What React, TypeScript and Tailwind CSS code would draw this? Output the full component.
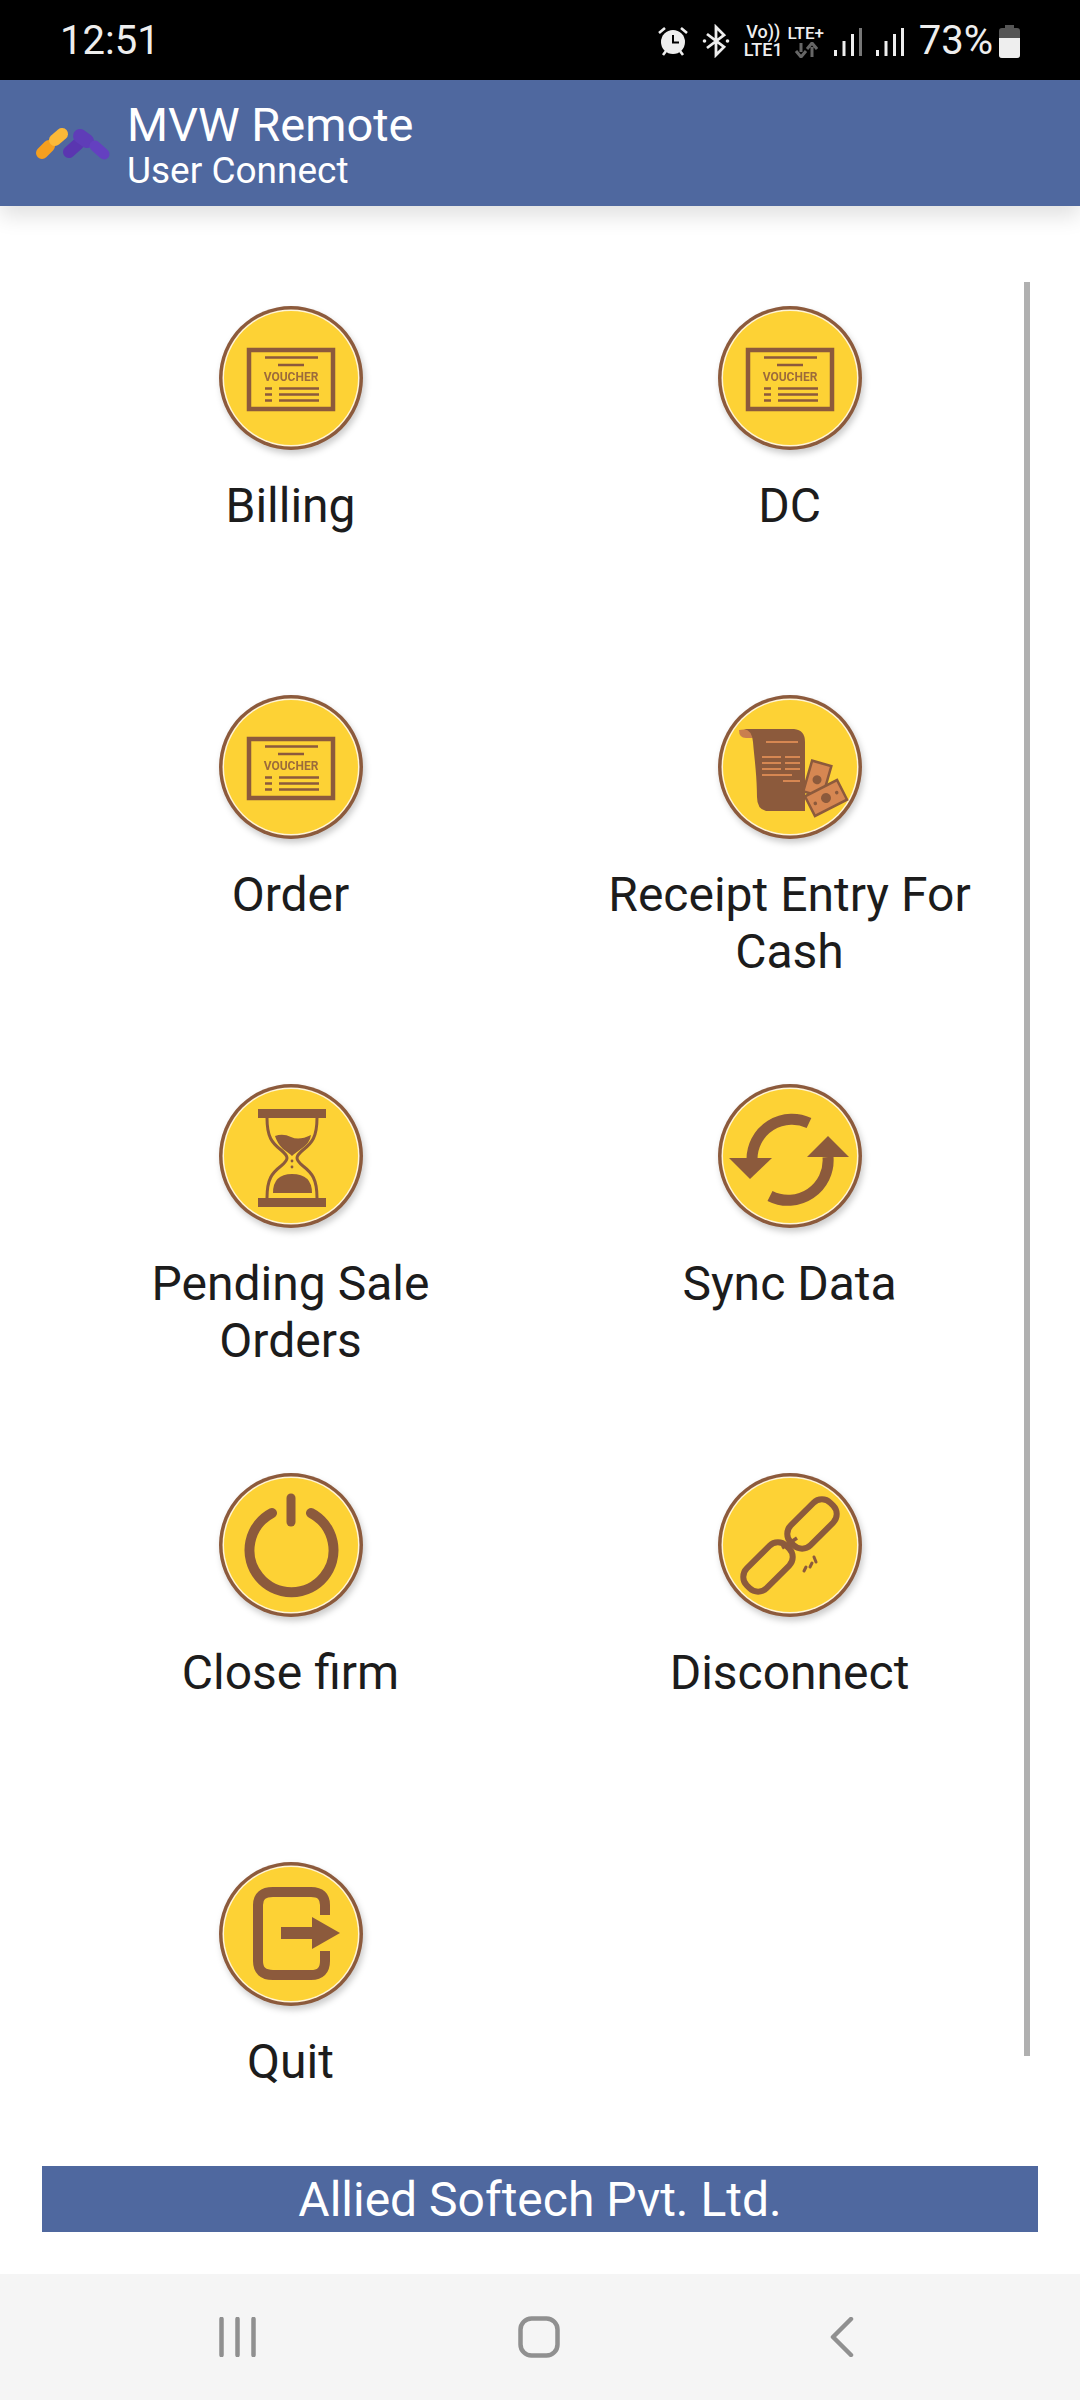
import React from 'react';

const BROWN = '#8c5a3c';

const Badge: React.FC<{ cy?: number; children: React.ReactNode }> = ({ cy = 85, children }) => (
  <svg
    width="180"
    height="180"
    viewBox="0 0 180 180"
    className="block shrink-0 drop-shadow-[2px_4px_3px_rgba(0,0,0,0.2)]"
  >
    <circle cx="90" cy="90" r="72" fill={BROWN} />
    <circle cx="90" cy="90" r="68.500" fill="#fff4d6" />
    <circle cx="90" cy="90" r="67" fill="#fdd235" />
    <g transform={`translate(0 ${90 - cy})`}>{children}</g>
  </svg>
);

const VoucherIcon = () => (
  <g stroke={BROWN} fill="none">
    <rect x="48" y="60" width="84" height="59" strokeWidth="4.500" />
    <path d="M64 67.500H117M77 75H103" strokeWidth="2.400" />
    <text
      x="90"
      y="91"
      textAnchor="middle"
      fontSize="12"
      fontWeight="700"
      fontFamily="Roboto, sans-serif"
      fill={BROWN}
      stroke="none"
      opacity="0.85"
    >
      VOUCHER
    </text>
    <path d="M64 98.500H71M64 104.500H71M64 110.500H71M78 98.500H118M78 104.500H118M78 110.500H118" strokeWidth="2.400" />
  </g>
);

const ReceiptIcon = () => (
  <g>
    <path d="M39 50Q39 58 46 58H53Q52 52 48 49Z" fill="#c97f4e" />
    <path
      d="M44 49H94Q105 50 105 62V131H66Q57 129 57 117C57 95 54 75 53 62Q52 50 44 49Z"
      fill={BROWN}
    />
    <path
      d="M66 62H98M62 77H81M85 77H100M62 83H81M85 83H100M62 89H81M85 89H100M62 95H92M83 101H100"
      stroke="#d68752"
      strokeWidth="2"
      fill="none"
    />
    <g transform="rotate(16 118 100)">
      <rect x="107" y="83" width="20" height="32" fill="#d68752" stroke={BROWN} strokeWidth="2.500" />
      <circle cx="117" cy="100" r="4.500" fill={BROWN} />
    </g>
    <g transform="rotate(-27 126 118)">
      <rect x="108" y="107" width="36" height="22" fill="#d68752" stroke={BROWN} strokeWidth="2.500" />
      <circle cx="126" cy="118" r="5" fill={BROWN} />
      <circle cx="114" cy="118" r="1.800" fill={BROWN} />
      <circle cx="138" cy="118" r="1.800" fill={BROWN} />
    </g>
  </g>
);

const HourglassIcon = () => (
  <g fill={BROWN}>
    <rect x="57" y="38" width="68" height="9" />
    <rect x="57" y="127" width="68" height="9" />
    <path
      d="M66 47C66 66 71 72 80 79Q86 84 86 87Q86 90 80 95C71 102 66 108 66 127M116 47C116 66 111 72 102 79Q96 84 96 87Q96 90 102 95C111 102 116 108 116 127"
      fill="none"
      stroke={BROWN}
      strokeWidth="3"
    />
    <path d="M74 65Q82 62 90 66T110 64Q109 72 100 78Q93 83 91 85Q89 83 82 78Q76 72 74 65Z" />
    <path d="M72 122Q72 103 91 103Q111 103 111 122Z" />
    <circle cx="91" cy="90" r="1.400" />
    <circle cx="91" cy="96" r="1.400" />
  </g>
);

const SyncIcon = () => (
  <g fill={BROWN}>
    <path d="M109 52A40 40 0 0 0 52 88M70 125A40 40 0 0 0 128 86" fill="none" stroke={BROWN} strokeWidth="11" />
    <path d="M29 87H72L50 108Z" />
    <path d="M107 86H149L128 65Z" />
  </g>
);

const PowerIcon = () => (
  <g fill="none" stroke={BROWN} strokeLinecap="round">
    <path d="M71 53A42 42 0 1 0 110 53" strokeWidth="10" />
    <path d="M90 38V62" strokeWidth="9" />
  </g>
);

const LinkIcon = () => (
  <g fill="none" stroke={BROWN} strokeWidth="6">
    <rect x="-28" y="-14" width="56" height="28" rx="12" transform="translate(112 64) rotate(-45)" />
    <rect x="-28" y="-14" width="56" height="28" rx="12" transform="translate(68 107) rotate(-45)" />
    <path d="M82 88L97 78" strokeWidth="3.500" />
    <path d="M104 111L106 107M110 107L112 103M116 102L114 97" strokeWidth="3" strokeLinecap="round" />
  </g>
);

const QuitIcon = () => (
  <g>
    <path
      d="M124 64V54Q124 41 110 41H72Q57 41 57 54V110Q57 124 72 124H110Q124 124 124 110V100"
      fill="none"
      stroke={BROWN}
      strokeWidth="10"
    />
    <rect x="80" y="76" width="33" height="12" fill={BROWN} />
    <path d="M111 66L139 82L111 98Z" fill={BROWN} />
  </g>
);

const items = [
  { label: ['Billing'], icon: <VoucherIcon />, cy: 88 },
  { label: ['DC'], icon: <VoucherIcon />, cy: 88 },
  { label: ['Order'], icon: <VoucherIcon />, cy: 88 },
  { label: ['Receipt Entry For', 'Cash'], icon: <ReceiptIcon />, cy: 87 },
  { label: ['Pending Sale', 'Orders'], icon: <HourglassIcon />, cy: 85 },
  { label: ['Sync Data'], icon: <SyncIcon />, cy: 85 },
  { label: ['Close firm'], icon: <PowerIcon />, cy: 85 },
  { label: ['Disconnect'], icon: <LinkIcon />, cy: 85 },
  { label: ['Quit'], icon: <QuitIcon />, cy: 83 },
];

const StatusIcons = () => (
  <div className="flex items-center text-[#eeeeee]">
    {/* alarm */}
    <svg width="32" height="32" viewBox="0 0 32 32">
      <circle cx="16" cy="17" r="12" fill="#eeeeee" />
      <path d="M16 10V17.500H22" fill="none" stroke="#000" strokeWidth="2" />
      <path d="M2 8L8 3M30 8L24 3M6 30L9 26M26 30L23 26" stroke="#eeeeee" strokeWidth="2.600" />
    </svg>
    {/* bluetooth */}
    <svg width="28" height="34" viewBox="0 0 28 34" className="ml-[13px]">
      <path d="M5 10L22 23L14 31V3L22 11L5 24" fill="none" stroke="#eeeeee" strokeWidth="2.800" />
      <circle cx="2.500" cy="17" r="1.800" fill="#eeeeee" />
      <circle cx="25.500" cy="17" r="1.800" fill="#eeeeee" />
    </svg>
    <div className="ml-[13px] flex w-[41px] flex-col items-center text-[18px] leading-[18px] font-medium">
      <span>Vo))</span>
      <span>LTE1</span>
    </div>
    <div className="ml-[3px] flex w-[38px] flex-col items-center">
      <span className="text-[17px] leading-[18px] font-medium">LTE+</span>
      <svg width="24" height="16" viewBox="0 0 24 16">
        <path d="M7 1V10M2 9L7 15L12 9" fill="none" stroke="#666" strokeWidth="3" />
        <path d="M18 15V5M13 7L18 1L23 7" fill="none" stroke="#666" strokeWidth="3" />
      </svg>
    </div>
    <svg width="28" height="30" viewBox="0 0 28 30" className="ml-[9px]">
      <path d="M0 24h3v6H0zM8.500 15h3v15h-3zM17 8h3v22h-3z" fill="#eeeeee" />
      <path d="M25 2h3v28h-3z" fill="#777" />
    </svg>
    <svg width="28" height="30" viewBox="0 0 28 30" className="ml-[14px]">
      <path d="M0 24h3v6H0zM8.500 15h3v15h-3zM17 8h3v22h-3zM25 2h3v28h-3z" fill="#eeeeee" />
    </svg>
    <span className="ml-[15px] text-[40px] leading-none">73%</span>
    <svg width="21" height="33" viewBox="0 0 21 33" className="ml-[6px]">
      <path d="M6 0h9v3h3q3 0 3 3v24q0 3-3 3H3q-3 0-3-3V6q0-3 3-3h3z" fill="#555" />
      <path d="M0 13h21v17q0 3-3 3H3q-3 0-3-3z" fill="#eeeeee" />
    </svg>
  </div>
);

const App: React.FC = () => {
  return (
    <div className="flex h-[2400px] w-[1080px] flex-col overflow-hidden bg-white font-['Roboto',sans-serif]">
      <div className="flex h-[80px] shrink-0 items-center justify-between bg-black pt-[2px] pr-[60px] pl-[60px]">
        <span className="text-[40px] leading-none text-[#eeeeee]">12:51</span>
        <StatusIcons />
      </div>

      <header className="relative z-10 flex h-[126px] shrink-0 items-center bg-[#4f689f] pl-[36px] shadow-[0_10px_20px_rgba(0,0,0,0.12)]">
        <svg width="76" height="40" viewBox="0 0 76 40">
          <path d="M6 30L13 23" stroke="#f59f1e" strokeWidth="12" strokeLinecap="round" />
          <path d="M19 17L26 11" stroke="#fbb938" strokeWidth="12" strokeLinecap="round" />
          <path d="M33 29L42 21" stroke="#5a36b0" strokeWidth="12" strokeLinecap="round" />
          <path d="M44 13L51 18" stroke="#5f3db8" strokeWidth="14" strokeLinecap="round" />
          <path d="M59 23L68 31" stroke="#6440c0" strokeWidth="11" strokeLinecap="round" />
        </svg>
        <div className="mt-[6px] ml-[15px] flex flex-col text-white">
          <span className="text-[47px] leading-[50px]">MVW Remote</span>
          <span className="text-[37px] leading-[42px]">User Connect</span>
        </div>
      </header>

      <main className="relative min-h-0 flex-1 overflow-hidden pt-[82px]">
        <div className="mx-[41px] grid grid-cols-2 auto-rows-[389px]">
          {items.map((item, i) => (
            <div key={i} className="flex flex-col items-center">
              <Badge cy={item.cy}>{item.icon}</Badge>
              <div className="mt-[9px] flex flex-col items-center text-[48px] leading-[57px] text-[#1c1c1c]">
                {item.label.map(line => (
                  <span key={line}>{line}</span>
                ))}
              </div>
            </div>
          ))}
        </div>
        {/* scrollbar thumb */}
        <div className="absolute top-[76px] right-[50px] h-[1774px] w-[6px] bg-[#b0b0b0]" />
      </main>

      <div className="mx-[42px] flex h-[66px] shrink-0 items-center justify-center bg-[#4f689f] pt-[2px] text-[48px] leading-none text-white">
        Allied Softech Pvt. Ltd.
      </div>

      <div className="h-[42px] shrink-0" />

      <nav className="flex h-[126px] shrink-0 items-center bg-[#f5f5f5] pl-[219px]">
        <svg width="37" height="40" viewBox="0 0 37 40">
          <path d="M2.500 2V38M18.500 2V38M34.500 2V38" stroke="#909090" strokeWidth="4.500" strokeLinecap="round" />
        </svg>
        <svg width="42" height="42" viewBox="0 0 42 42" className="ml-[262px]">
          <rect x="2.500" y="2.500" width="37" height="37" rx="11" fill="none" stroke="#909090" strokeWidth="4.500" />
        </svg>
        <svg width="24" height="40" viewBox="0 0 24 40" className="ml-[270px]">
          <path d="M21 2L3 20L21 38" fill="none" stroke="#909090" strokeWidth="4.500" strokeLinecap="round" strokeLinejoin="round" />
        </svg>
      </nav>
    </div>
  );
};

export default App;
